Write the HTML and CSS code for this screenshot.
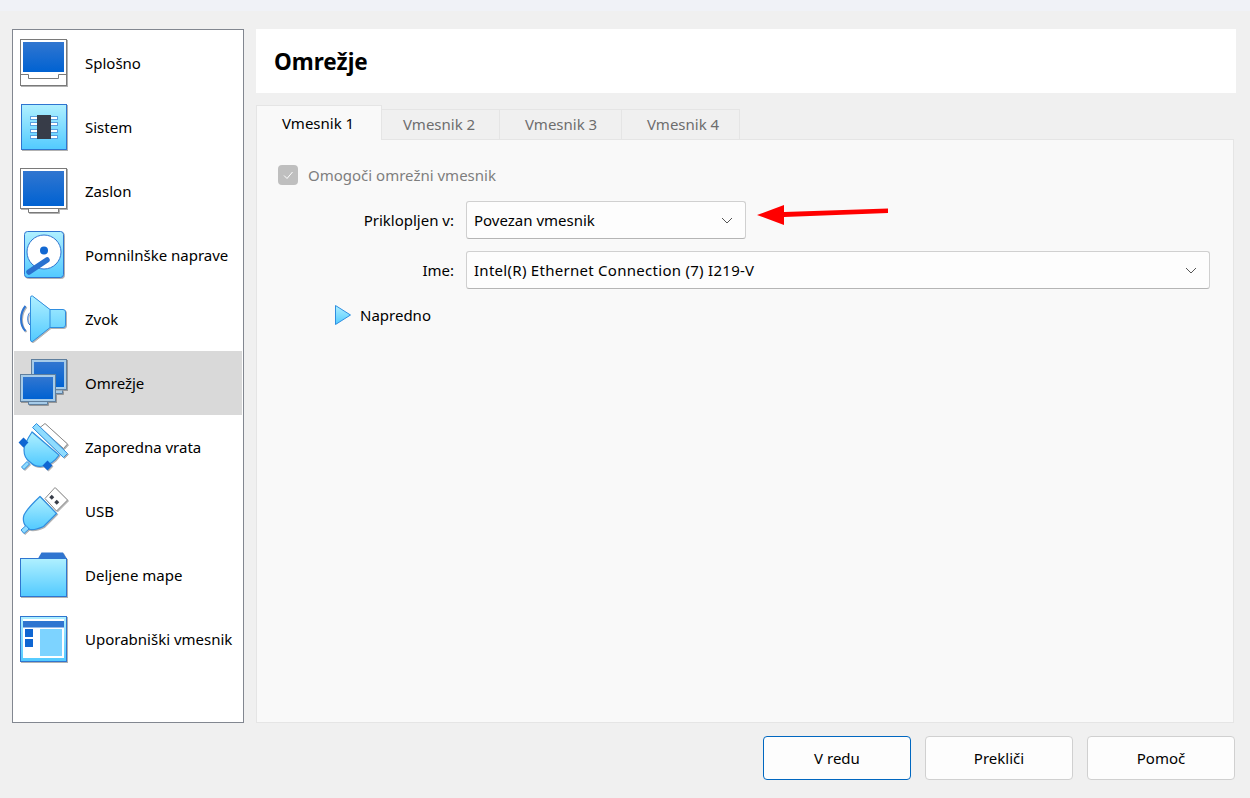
FILE: index.html
```html
<!DOCTYPE html>
<html lang="sl">
<head>
    <meta charset="UTF-8">
    <meta name="viewport" content="width=device-width, initial-scale=1.0">
    <title>Omrežje</title>
    <link rel="stylesheet" href="styles.css">
</head>
<body>
    <svg class="defs" width="0" height="0" aria-hidden="true">
        <defs>
            <linearGradient id="screen" x1="0" y1="0" x2="0" y2="1">
                <stop offset="0" stop-color="#3176d0"/>
                <stop offset="1" stop-color="#0062d2"/>
            </linearGradient>
            <linearGradient id="sky" x1="0" y1="0" x2="0" y2="1">
                <stop offset="0" stop-color="#b0f0ff"/>
                <stop offset="1" stop-color="#52caff"/>
            </linearGradient>
        </defs>
    </svg>

    <div class="top-strip"></div>

    <div class="dialog">
        <div class="content">
            <ul class="sidebar">
                <li class="side-item">
                    <svg class="side-icon" viewBox="0 0 48 48">
                        <rect x="0.5" y="0.5" width="46" height="46" fill="#fff" stroke="#7a7a7a"/>
                        <rect x="3" y="3" width="41" height="30" fill="url(#screen)"/>
                        <path d="M0.5 35.5H8.5V39.5H38.5V35.5H46.5" fill="none" stroke="#7a7a7a"/>
                    </svg>
                    <span>Splošno</span>
                </li>
                <li class="side-item">
                    <svg class="side-icon" viewBox="0 0 48 48">
                        <rect x="1.5" y="1.5" width="45" height="45" fill="url(#sky)" stroke="#2f75d0"/>
                        <g fill="#fff" stroke="#5aa0e0">
                            <rect x="10.5" y="13.5" width="27" height="3"/>
                            <rect x="10.5" y="19.5" width="27" height="3"/>
                            <rect x="10.5" y="26.5" width="27" height="3"/>
                            <rect x="10.5" y="32.5" width="27" height="3"/>
                        </g>
                        <rect x="17" y="12" width="14" height="24" fill="#373c48"/>
                    </svg>
                    <span>Sistem</span>
                </li>
                <li class="side-item">
                    <svg class="side-icon" viewBox="0 0 48 48">
                        <path d="M8.5 41.5V45.5H38.5V41.5" fill="#fff" stroke="#7a7a7a"/>
                        <rect x="0.5" y="1.5" width="46" height="40" fill="#fff" stroke="#7a7a7a"/>
                        <rect x="3" y="4" width="41" height="35" fill="url(#screen)"/>
                    </svg>
                    <span>Zaslon</span>
                </li>
                <li class="side-item">
                    <svg class="side-icon" viewBox="0 0 48 48">
                        <rect x="4.5" y="0.5" width="39" height="46" rx="3" fill="url(#sky)" stroke="#2f75d0"/>
                        <circle cx="24" cy="21" r="17" fill="#fff" stroke="#2f75d0"/>
                        <circle cx="24" cy="19.500" r="4" fill="#1268d2"/>
                        <path d="M9 41L27 29" stroke="#2a72d0" stroke-width="5.5" stroke-linecap="round"/>
                    </svg>
                    <span>Pomnilnške naprave</span>
                </li>
                <li class="side-item">
                    <svg class="side-icon" viewBox="0 0 48 48">
                        <path d="M5.5 11C-0.5 18 -0.5 30 5.5 36" fill="none" stroke="#2f75d0" stroke-width="2"/>
                        <path d="M10 17.5C7 20 7 28 10 30" fill="none" stroke="#2f75d0"/>
                        <path d="M10.5 2.5Q10.5 0.5 12.5 1L30 14.5H43Q45.5 14.5 45.5 17V30Q45.5 32.5 43 32.5H30L12.5 46.5Q10.5 47 10.5 45Z" fill="url(#sky)" stroke="#2f8ee0"/>
                        <path d="M30 14.5V32.5" stroke="#2f8ee0"/>
                    </svg>
                    <span>Zvok</span>
                </li>
                <li class="side-item side-item-active">
                    <svg class="side-icon" viewBox="0 0 48 48">
                        <path d="M19.5 31.5V34.5H42.5V31.5" fill="#a6cbe8" stroke="#5f7f9e"/>
                        <rect x="11.5" y="0.5" width="35" height="30" fill="#a6cbe8" stroke="#5f7f9e"/>
                        <rect x="14" y="3" width="30" height="25" fill="url(#screen)"/>
                        <path d="M8.5 42.5V45.5H27.5V42.5" fill="#a6cbe8" stroke="#5f7f9e"/>
                        <rect x="0.5" y="15.5" width="35" height="27" fill="#a6cbe8" stroke="#5f7f9e"/>
                        <rect x="3" y="18" width="30" height="22" fill="url(#screen)"/>
                    </svg>
                    <span>Omrežje</span>
                </li>
                <li class="side-item">
                    <svg class="side-icon" viewBox="0 0 48 48">
                        <path d="M25 0.5L47.5 21L43.5 25.5L20 4.5Z" fill="#fff" stroke="#8a8a8a"/>
                        <path d="M12 9C8 15 4 21 4 27C4 33 7 37 10 39C14 43 19 44 23 43C29 42 35 38 39 32Z" fill="url(#sky)" stroke="#2f8ee0" stroke-width="1.2"/>
                        <path d="M16.5 0.5L47.5 30.5L43.5 34.5L12.5 4.5Z" fill="#8fdcff" stroke="#2f8ee0"/>
                        <rect x="0" y="16" width="7" height="7" transform="rotate(45 3.5 19.5)" fill="#0f66d2"/>
                        <rect x="24" y="39" width="7" height="7" transform="rotate(45 27.5 42.5)" fill="#0f66d2"/>
                        <path d="M1.5 44L7 38.5L9.5 41L4 46.5Z" fill="#8fdcff" stroke="#2f8ee0"/>
                    </svg>
                    <span>Zaporedna vrata</span>
                </li>
                <li class="side-item">
                    <svg class="side-icon" viewBox="0 0 48 48">
                        <path d="M35 0.5L47.5 13L36.5 24L25 11.500Z" fill="#fff" stroke="#8a8a8a"/>
                        <rect x="30" y="8.5" width="3.5" height="3.5" transform="rotate(45 31.75 10.25)" fill="#373c48"/>
                        <rect x="35" y="13.5" width="3.5" height="3.5" transform="rotate(45 36.75 15.25)" fill="#373c48"/>
                        <path d="M20 9.5L36.500 26.500L23.500 39.500C18 42 13 43 10 42.500C7 41 5 39 4 36C3 33 3 31 4 28C6 24 13 16 20 9.500Z" fill="url(#sky)" stroke="#2f8ee0" stroke-width="1.2"/>
                        <path d="M1 43L6 38.5L9 42L4 46.5Z" fill="#8fdcff" stroke="#2f8ee0"/>
                    </svg>
                    <span>USB</span>
                </li>
                <li class="side-item">
                    <svg class="side-icon" viewBox="0 0 48 48">
                        <path d="M18 7.5L21.500 1.5H43L46.5 7.5Z" fill="#2f75d0"/>
                        <rect x="0.5" y="7.5" width="46" height="38" fill="url(#sky)" stroke="#2f75d0"/>
                    </svg>
                    <span>Deljene mape</span>
                </li>
                <li class="side-item">
                    <svg class="side-icon" viewBox="0 0 48 48">
                        <rect x="0.5" y="1.5" width="46" height="45" fill="url(#sky)" stroke="#2f75d0"/>
                        <rect x="3" y="4" width="41" height="39" fill="#fff"/>
                        <rect x="3" y="6" width="41" height="6.5" fill="#2f75d0"/>
                        <rect x="5" y="14" width="8" height="8" fill="#0f66d2"/>
                        <rect x="5" y="24" width="8" height="8" fill="#0f66d2"/>
                        <rect x="20" y="14" width="22" height="27" fill="#7dd3ff"/>
                    </svg>
                    <span>Uporabniški vmesnik</span>
                </li>
            </ul>

            <div class="main">
                <h1 class="page-title">Omrežje</h1>

                <div class="tabs">
                    <div class="tab tab-active">Vmesnik 1</div>
                    <div class="tab tab-second">Vmesnik 2</div>
                    <div class="tab tab-wide">Vmesnik 3</div>
                    <div class="tab">Vmesnik 4</div>
                </div>

                <div class="panel">
                    <div class="check-row">
                        <span class="checkbox">
                            <svg width="12" height="12" viewBox="0 0 12 12"><path d="M2 6.5L5 9.5L10.5 3" fill="none" stroke="#fff" stroke-width="1"/></svg>
                        </span>
                        <span>Omogoči omrežni vmesnik</span>
                    </div>
                    <div class="form-row">
                        <label class="form-label">Priklopljen v:</label>
                        <div class="combo combo-short">
                            <span>Povezan vmesnik</span>
                            <svg class="chevron" width="12" height="7" viewBox="0 0 12 7"><path d="M1 1L6 6L11 1" fill="none" stroke="#555"/></svg>
                        </div>
                    </div>
                    <div class="form-row">
                        <label class="form-label">Ime:</label>
                        <div class="combo combo-long">
                            <span>Intel(R) Ethernet Connection (7) I219-V</span>
                            <svg class="chevron" width="12" height="7" viewBox="0 0 12 7"><path d="M1 1L6 6L11 1" fill="none" stroke="#555"/></svg>
                        </div>
                    </div>
                    <div class="advanced">
                        <svg width="16" height="20" viewBox="0 0 16 20">
                            <path d="M0.5 0.5L15.5 10L0.5 19.5Z" fill="url(#sky)" stroke="#2f8ee0"/>
                        </svg>
                        <span>Napredno</span>
                    </div>
                </div>
            </div>
        </div>

        <div class="buttons">
            <button class="btn btn-default">V redu</button>
            <button class="btn">Prekliči</button>
            <button class="btn">Pomoč</button>
        </div>
    </div>

    <svg class="arrow" width="134" height="24" viewBox="0 0 134 24">
        <path d="M0 12L27 2V9L131 5.5V10L27 14V22Z" fill="#f00"/>
    </svg>
</body>
</html>
```

FILE: styles.css
```css
body {
    margin: 0;
    height: 798px;
    overflow: hidden;
    background-color: #f0f0f0;
    color: #000;
    font-family: "Noto Sans", "Open Sans", sans-serif;
    font-size: 15px;
}

.defs {
    position: absolute;
}

.top-strip {
    height: 11px;
    background-color: #f0f2f7;
}

.dialog {
    padding: 18px 14px 0 12px;
}

.content {
    display: flex;
    gap: 12px;
    height: 694px;
}

.sidebar {
    width: 232px;
    box-sizing: border-box;
    margin: 0;
    padding: 1px;
    list-style: none;
    background-color: #fff;
    border: 1px solid #828790;
}

.side-item {
    display: flex;
    align-items: center;
    gap: 17px;
    height: 64px;
    padding-left: 6px;
}

.side-item-active {
    background-color: #d9d9d9;
}

.side-icon {
    flex: none;
    width: 48px;
    height: 48px;
    overflow: visible;
    filter: drop-shadow(1px 1px 0.5px rgba(0, 0, 0, 0.3));
}

.main {
    flex: 1;
    display: flex;
    flex-direction: column;
}

.page-title {
    height: 64px;
    margin: 0 0 12px;
    padding-left: 18px;
    background-color: #fff;
    font-size: 22.5px;
    font-weight: bold;
    line-height: 66px;
}

.tabs {
    display: flex;
    align-items: flex-end;
    height: 34px;
    position: relative;
}

.tab {
    width: 118px;
    height: 30px;
    box-sizing: border-box;
    padding-left: 25px;
    background-color: #f0f0f0;
    border: 1px solid #e5e5e5;
    border-bottom: none;
    border-left: none;
    color: #6d6d6d;
    line-height: 29px;
}

.tab-second {
    padding-left: 21px;
}

.tab-wide {
    width: 122px;
}

.tab-active {
    width: 126px;
    height: 35px;
    margin-bottom: -1px;
    position: relative;
    background-color: #f9f9f9;
    border-left: 1px solid #e5e5e5;
    color: #000;
    line-height: 35px;
}

.panel {
    flex: 1;
    margin-right: 2px;
    padding: 25px 23px 0 21px;
    background-color: #f9f9f9;
    border: 1px solid #e5e5e5;
}

.check-row {
    display: flex;
    align-items: center;
    gap: 10px;
    height: 20px;
    color: #7e7e7e;
}

.checkbox {
    display: flex;
    align-items: center;
    justify-content: center;
    width: 20px;
    height: 20px;
    background-color: #bfbfbf;
    border-radius: 4px;
}

.form-row {
    display: flex;
    align-items: center;
    gap: 12px;
}

.check-row + .form-row {
    margin-top: 16px;
}

.form-row + .form-row {
    margin-top: 12px;
}

.form-label {
    width: 176px;
    text-align: right;
}

.combo {
    display: flex;
    align-items: center;
    justify-content: space-between;
    height: 38px;
    box-sizing: border-box;
    padding: 0 12px 0 7px;
    background-color: #fdfdfd;
    border: 1px solid #d0d0d0;
    border-bottom-color: #b5b5b5;
    border-radius: 3px;
}

.combo-short {
    width: 280px;
}

.combo-long {
    flex: 1;
    letter-spacing: 0.28px;
}

.advanced {
    display: flex;
    align-items: center;
    gap: 9px;
    margin: 16px 0 0 57px;
}

.buttons {
    display: flex;
    justify-content: flex-end;
    gap: 14px;
    margin-top: 13px;
    padding-right: 1px;
}

.btn {
    width: 148px;
    height: 44px;
    padding: 0;
    background-color: #fdfdfd;
    border: 1px solid #d0d0d0;
    border-radius: 4px;
    color: #000;
    font-family: inherit;
    font-size: 15px;
}

.btn-default {
    border-color: #0067c0;
}

/* rdeca puscica cez obrazec */
.arrow {
    position: absolute;
    left: 757px;
    top: 203px;
}
```
